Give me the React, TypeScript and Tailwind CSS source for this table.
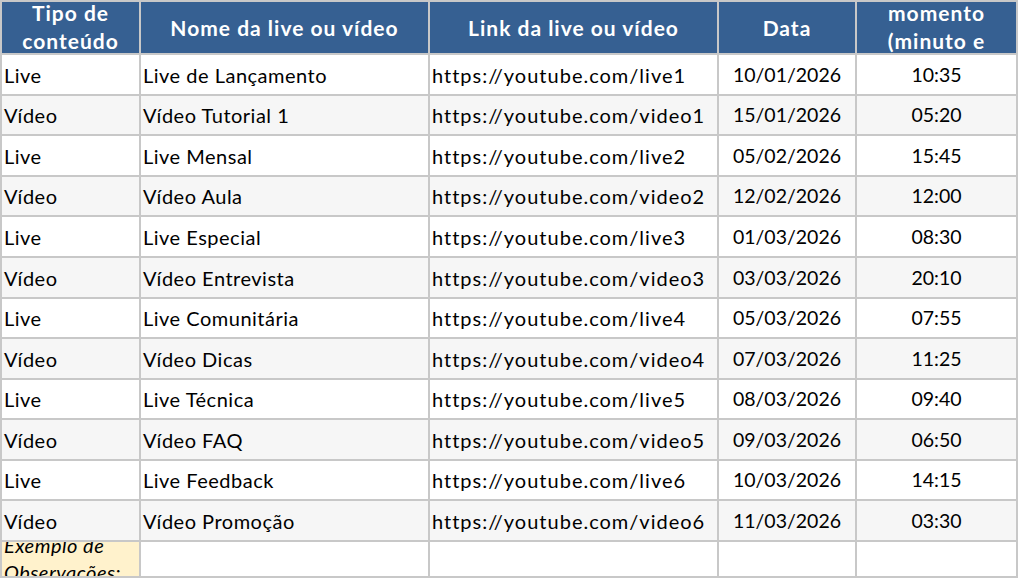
import React from 'react';

type Row = { tipo: string; nome: string; link: string; data: string; momento: string };

const rows: Row[] = [
  { tipo: 'Live', nome: 'Live de Lançamento', link: 'https://youtube.com/live1', data: '10/01/2026', momento: '10:35' },
  { tipo: 'Vídeo', nome: 'Vídeo Tutorial 1', link: 'https://youtube.com/video1', data: '15/01/2026', momento: '05:20' },
  { tipo: 'Live', nome: 'Live Mensal', link: 'https://youtube.com/live2', data: '05/02/2026', momento: '15:45' },
  { tipo: 'Vídeo', nome: 'Vídeo Aula', link: 'https://youtube.com/video2', data: '12/02/2026', momento: '12:00' },
  { tipo: 'Live', nome: 'Live Especial', link: 'https://youtube.com/live3', data: '01/03/2026', momento: '08:30' },
  { tipo: 'Vídeo', nome: 'Vídeo Entrevista', link: 'https://youtube.com/video3', data: '03/03/2026', momento: '20:10' },
  { tipo: 'Live', nome: 'Live Comunitária', link: 'https://youtube.com/live4', data: '05/03/2026', momento: '07:55' },
  { tipo: 'Vídeo', nome: 'Vídeo Dicas', link: 'https://youtube.com/video4', data: '07/03/2026', momento: '11:25' },
  { tipo: 'Live', nome: 'Live Técnica', link: 'https://youtube.com/live5', data: '08/03/2026', momento: '09:40' },
  { tipo: 'Vídeo', nome: 'Vídeo FAQ', link: 'https://youtube.com/video5', data: '09/03/2026', momento: '06:50' },
  { tipo: 'Live', nome: 'Live Feedback', link: 'https://youtube.com/live6', data: '10/03/2026', momento: '14:15' },
  { tipo: 'Vídeo', nome: 'Vídeo Promoção', link: 'https://youtube.com/video6', data: '11/03/2026', momento: '03:30' },
];

// row heights alternate to land on the sheet's 40.5px pitch
const heights = ['h-[41px]', 'h-[40px]', 'h-[41px]', 'h-[40px]', 'h-[41px]', 'h-[41px]', 'h-[40px]', 'h-[41px]', 'h-[40px]', 'h-[41px]', 'h-[40px]', 'h-[41px]'];

const cell = 'border-r-2 border-b-2 border-[#c8c8c8] flex items-center overflow-hidden whitespace-nowrap';
const head = `${cell} h-[53px] bg-[#366092] text-white font-bold justify-center text-center text-[21px] tracking-[1px] leading-[28px]`;

export default function App() {
  return (
    <div className="w-[1020px] h-[580px] bg-white overflow-hidden text-black" style={{ fontFamily: 'Lato, "Open Sans", sans-serif' }}>
      <div className="grid grid-cols-[139px_289px_289px_138px_161px] w-[1018px] border-l-2 border-t-2 border-[#c8c8c8] text-[20px]">
        {/* Header */}
        <div className={head}>
          <div className="-mt-[2px]">Tipo de<br />conteúdo</div>
        </div>
        <div className={head}>Nome da live ou vídeo</div>
        <div className={head}>Link da live ou vídeo</div>
        <div className={head}>Data</div>
        <div className={head}>
          <div className="-mt-[2px]">momento<br />(minuto e</div>
        </div>

        {/* Data rows */}
        {rows.map((r, i) => {
          const bg = i % 2 === 1 ? 'bg-[#f6f6f6]' : 'bg-white';
          const h = heights[i];
          return (
            <React.Fragment key={i}>
              <div className={`${cell} ${h} ${bg} pl-[2px] tracking-[0.5px]`}>{r.tipo}</div>
              <div className={`${cell} ${h} ${bg} pl-[2px] tracking-[0.5px]`}>{r.nome}</div>
              <div className={`${cell} ${h} ${bg} pl-[2px] tracking-[1px]`}>{r.link}</div>
              <div className={`${cell} ${h} ${bg} justify-center text-[19.5px]`}>{r.data}</div>
              <div className={`${cell} ${h} ${bg} justify-center text-[19.5px]`}>{r.momento}</div>
            </React.Fragment>
          );
        })}

        {/* Notes row, cut off by the window */}
        <div className={`${cell} h-[36px] bg-[#fff2cc] pl-[2px] items-start italic leading-[27px] tracking-[0.5px]`}>
          <div className="-mt-[10px]">Exemplo de<br />Observações:</div>
        </div>
        <div className={`${cell} h-[36px] bg-white`} />
        <div className={`${cell} h-[36px] bg-white`} />
        <div className={`${cell} h-[36px] bg-white`} />
        <div className={`${cell} h-[36px] bg-white`} />
      </div>
    </div>
  );
}
